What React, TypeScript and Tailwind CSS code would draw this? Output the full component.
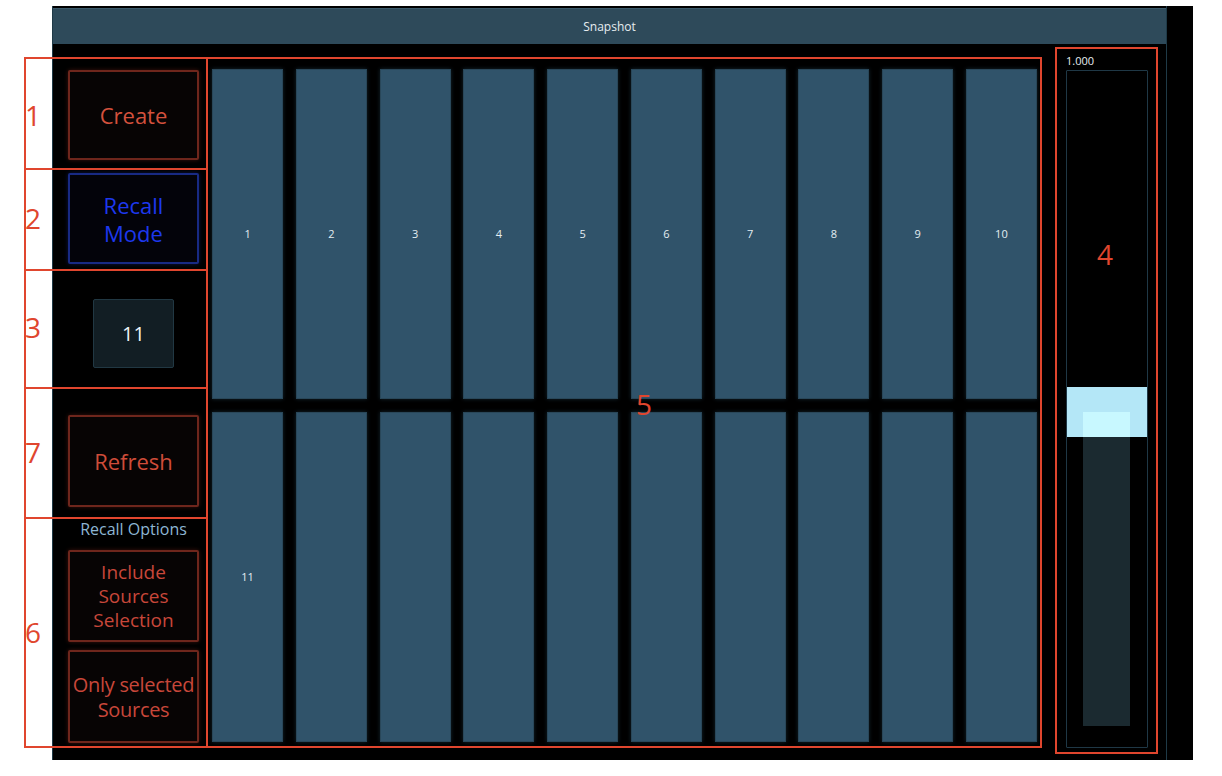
import React from 'react'

const font = { fontFamily: '"Open Sans", "Noto Sans", sans-serif' }

function RedButton({ children, h, tone = 'text-[#d4513d]' }: { children: React.ReactNode; h: string; tone?: string }) {
  return (
    <div
      className={`${h} w-[131px] flex items-center justify-center text-center rounded-[2px] bg-[#070404] border-2 border-[#6e261c] shadow-[0_0_4px_#3a130d] ${tone}`}
    >
      {children}
    </div>
  )
}

function Mark({ n, pos }: { n: string; pos: string }) {
  return <div className={`absolute ${pos} text-[28px] leading-[36px] text-[#e0462e]`}>{n}</div>
}

export default function App() {
  const tiles = Array.from({ length: 20 }, (_, i) => i)
  return (
    <div className="relative w-[1222px] h-[776px] bg-white overflow-hidden" style={font}>
      <div className="pl-[52px] pt-[6px]">
        <div className="w-[1141px] h-[754px] bg-black flex">
          <div className="w-[1115px] h-full border-x border-[#1f3a47] flex flex-col">
            <div className="mt-[2px] h-[36px] bg-[#2e4a5a] border-t border-[#3c5b6b] flex items-center justify-center text-[12px] text-[#e6edf0]">
              Snapshot
            </div>

            <div className="flex flex-1">
              {/* left column */}
              <div className="w-[159px] pl-[15px] flex flex-col">
                <div className="mt-[26px]">
                  <RedButton h="h-[90px]">
                    <span className="text-[22px]">Create</span>
                  </RedButton>
                </div>
                <div className="mt-[13px] h-[91px] w-[131px] flex items-center justify-center text-center rounded-[2px] bg-[#03030a] border-2 border-[#182a84] shadow-[0_0_4px_#0c1442] text-[#1d38ee] text-[22px] leading-[28px]">
                  Recall
                  <br />
                  Mode
                </div>
                <div className="mt-[35px] w-[131px] flex justify-center">
                  <div className="w-[81px] h-[69px] bg-[#121e24] border border-[#213843] rounded-[2px] flex items-center justify-center text-[20px] text-[#eef3f5]">
                    11
                  </div>
                </div>
                <div className="mt-[47px]">
                  <RedButton h="h-[92px]" tone="text-[#cf4c39]">
                    <span className="text-[22px]">Refresh</span>
                  </RedButton>
                </div>
                <div className="mt-[12px] w-[131px] h-[20px] flex items-center justify-center text-[16px] text-[#8db6d4]">
                  Recall Options
                </div>
                <div className="mt-[11px]">
                  <RedButton h="h-[92px]" tone="text-[#c8473a]">
                    <span className="text-[19px] leading-[24px]">
                      Include
                      <br />
                      Sources
                      <br />
                      Selection
                    </span>
                  </RedButton>
                </div>
                <div className="mt-[8px]">
                  <RedButton h="h-[93px]" tone="text-[#c8473a]">
                    <span className="text-[20px] leading-[25px] tracking-[-0.3px] whitespace-nowrap">
                      Only selected
                      <br />
                      Sources
                    </span>
                  </RedButton>
                </div>
              </div>

              {/* snapshot grid */}
              <div className="w-[825px] mt-[25px] h-[673px] grid grid-cols-10 grid-rows-2 gap-x-[12.6px] gap-y-[13px]">
                {tiles.map(i => (
                  <div
                    key={i}
                    className="bg-[#30536a] border border-[#294759] shadow-[0_0_4px_#142630] flex items-center justify-center text-[11px] text-[#e4eef2]"
                  >
                    {i < 11 ? i + 1 : ''}
                  </div>
                ))}
              </div>

              {/* fader */}
              <div className="ml-[29px] w-[82px] flex flex-col">
                <div className="mt-[10px] h-[14px] text-[11px] leading-[14px] text-[#e6edf0]">1.000</div>
                <div className="mt-[2px] h-[678px] relative border border-[#1f3846] rounded-[1px] bg-black">
                  <div className="absolute left-[16px] w-[47px] top-[341px] bottom-[21px] bg-[#1b2a30]" />
                  <div className="absolute left-0 right-0 top-[316px] h-[50px] bg-[#b4e7f7]">
                    <div className="absolute left-[16px] w-[47px] top-[25px] bottom-0 bg-[#c8f8ff]" />
                  </div>
                </div>
              </div>
            </div>
          </div>
        </div>
      </div>

      {/* annotation overlay */}
      <div className="absolute left-[24px] top-[57px] w-[184px] h-[691px] border-2 border-[#e0462e] flex flex-col pointer-events-none">
        <div className="h-[111px] border-b-2 border-[#e0462e]" />
        <div className="h-[101px] border-b-2 border-[#e0462e]" />
        <div className="h-[118px] border-b-2 border-[#e0462e]" />
        <div className="h-[130px] border-b-2 border-[#e0462e]" />
      </div>
      <div className="absolute left-[206px] top-[57px] w-[836px] h-[691px] border-2 border-[#e0462e] pointer-events-none" />
      <div className="absolute left-[1055px] top-[47px] w-[103px] h-[707px] border-2 border-[#e0462e] pointer-events-none" />

      <Mark n="1" pos="left-[25px] top-[97px]" />
      <Mark n="2" pos="left-[25px] top-[200px]" />
      <Mark n="3" pos="left-[25px] top-[309px]" />
      <Mark n="7" pos="left-[25px] top-[434px]" />
      <Mark n="6" pos="left-[25px] top-[614px]" />
      <Mark n="5" pos="left-[636px] top-[386px]" />
      <Mark n="4" pos="left-[1097px] top-[236px]" />
    </div>
  )
}
